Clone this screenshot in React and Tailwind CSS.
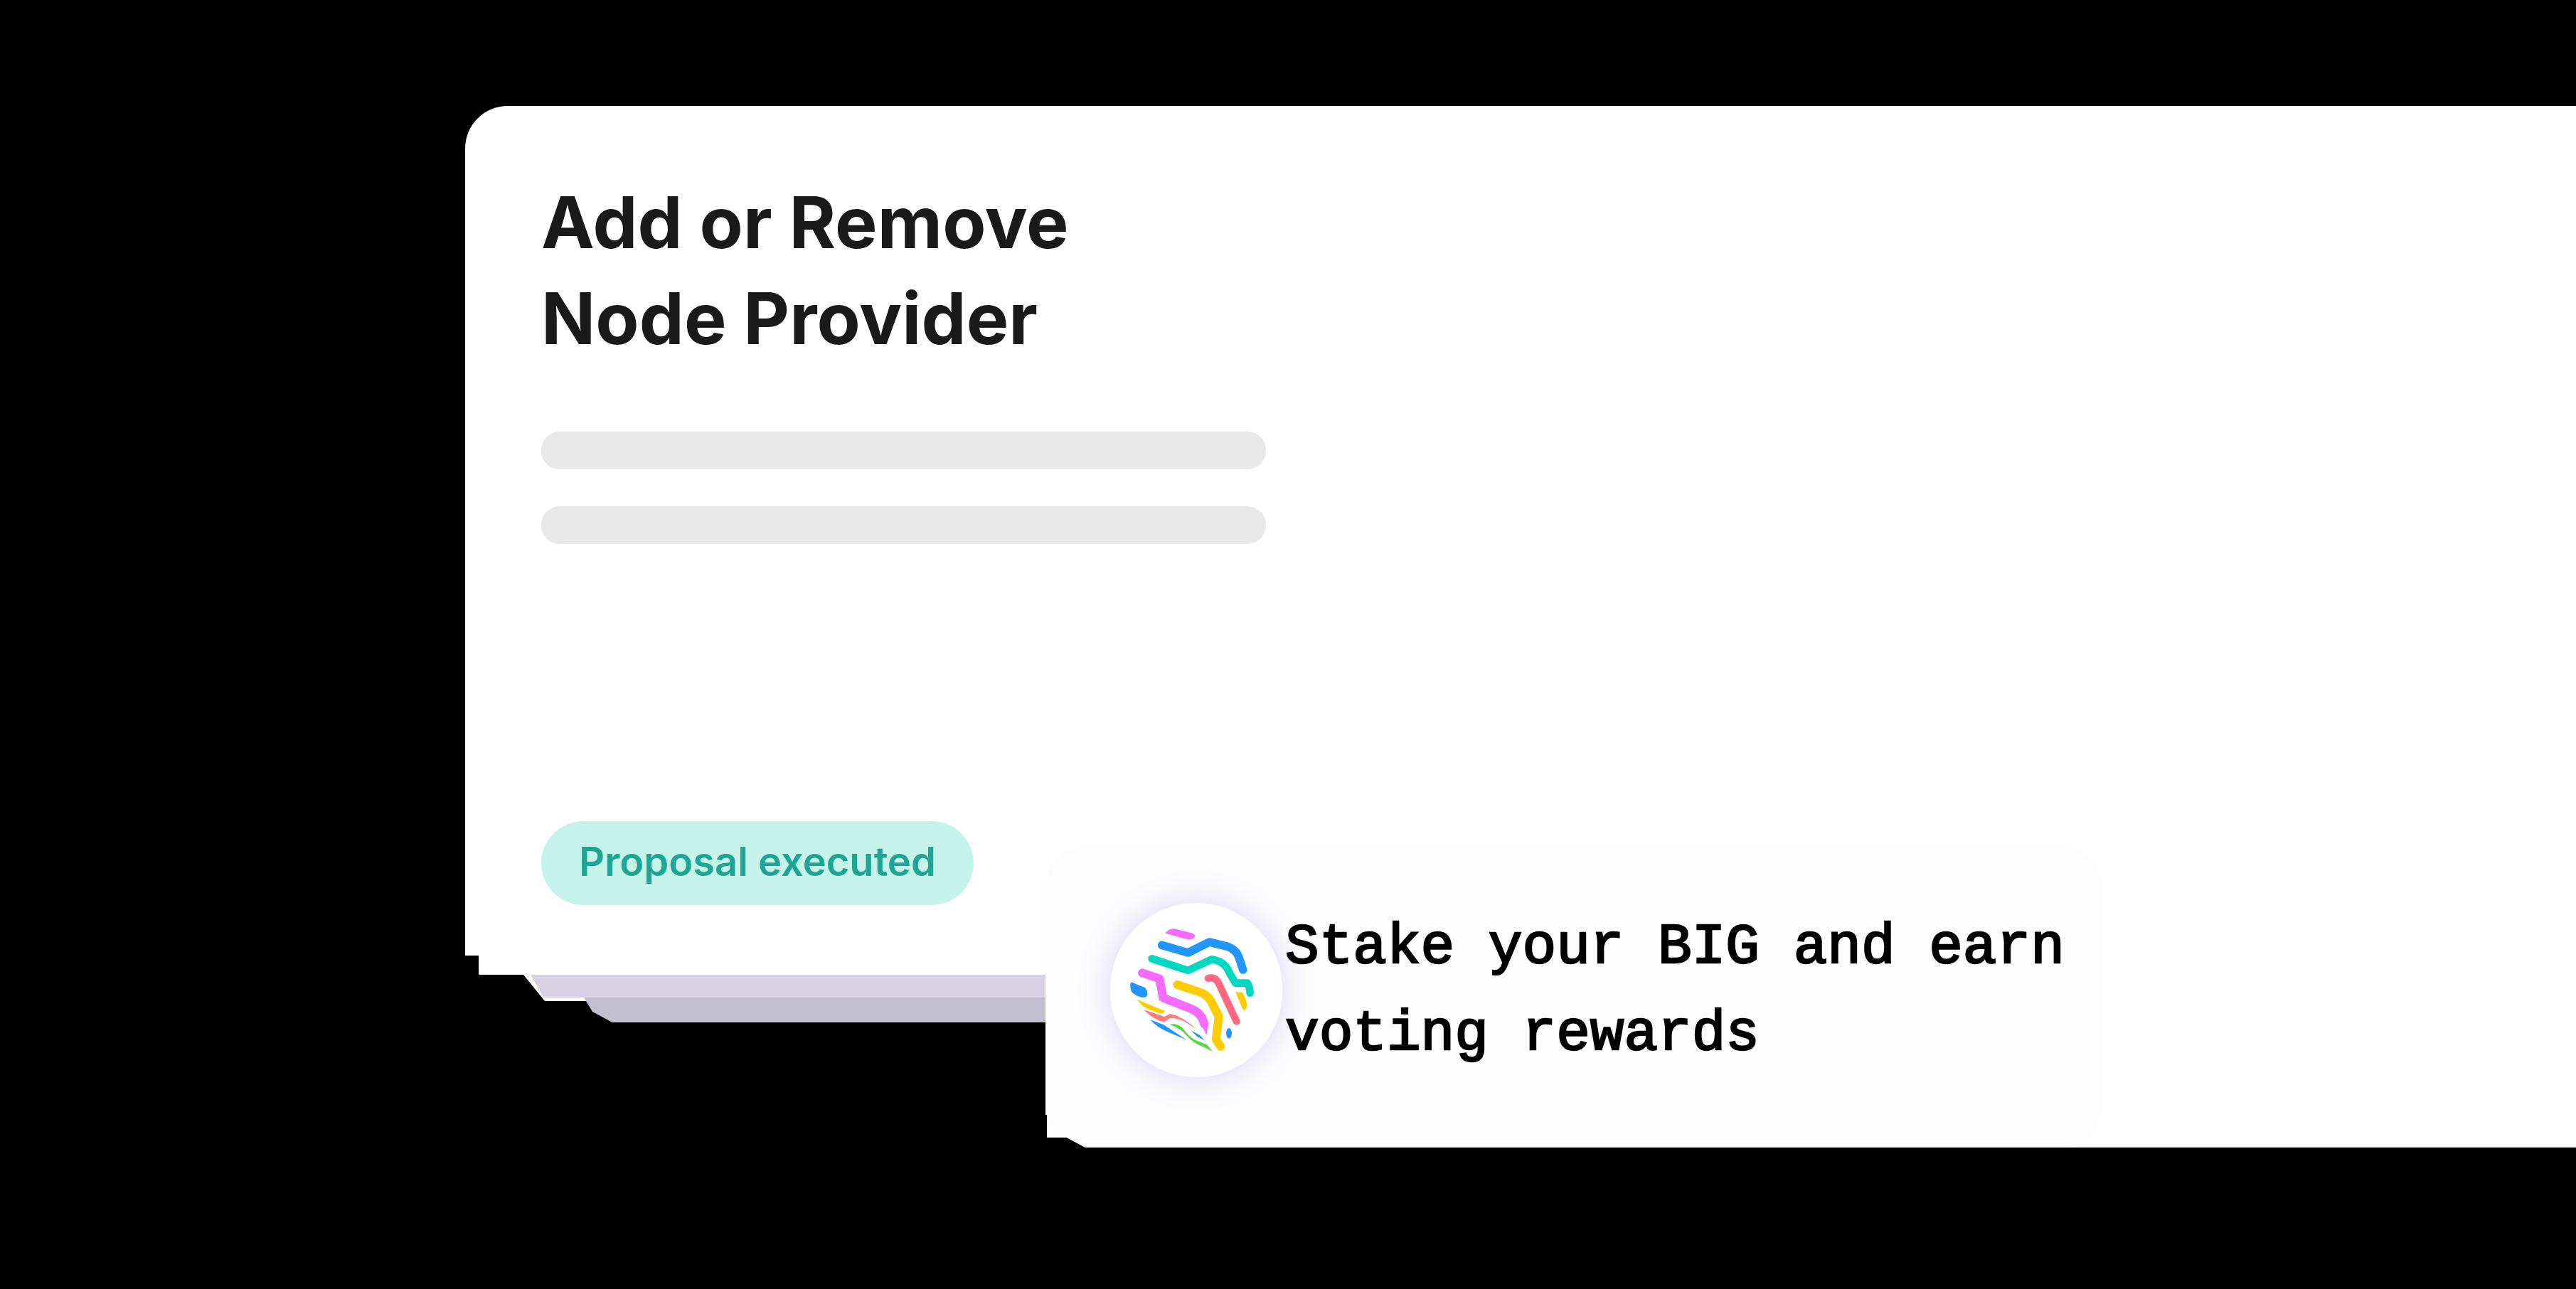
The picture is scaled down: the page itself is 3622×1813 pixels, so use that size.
/**
 * Proposal card with a staking notification laid over its corner
 */

const BigLogo = () => (
  <svg viewBox="62 90 726 735" className="w-full h-full" fill="none" strokeLinecap="round" strokeLinejoin="round">
    <path d="M295 218 Q310 195 340 200 L405 217 Q425 225 418 235 Q405 248 385 243 Z" fill="#f56bff" />
    <path d="M280 268 L390 300 L480 255 L560 275 Q595 290 605 320 L622 372" stroke="#2196ff" strokeWidth="35" />
    <path d="M238 325 L390 375 L490 328 Q545 335 565 385 L590 428 L640 428 Q650 440 652 470" stroke="#00d8c0" strokeWidth="32" />
    <path d="M197 385 L270 410 L285 490 L400 535 Q450 555 458 600" stroke="#f56bff" strokeWidth="36" />
    <path d="M440 590 L477 595 L468 648 Z" fill="#f56bff" />
    <path d="M345 435 L450 470 Q480 485 495 520 L520 570 L508 665 L528 696" stroke="#ffcc00" strokeWidth="36" />
    <path d="M475 408 Q505 400 520 430 L595 590" stroke="#ff6680" strokeWidth="30" />
    <path d="M590 465 L618 467 Q630 480 640 520 L630 545 Q620 540 615 525 Z" fill="#ffcc00" />
    <ellipse cx="563" cy="640" rx="12" ry="22" fill="#2196ff" />
    <path d="M147 430 Q150 420 165 430 L210 448 Q225 470 215 485 Q205 492 185 485 Q150 475 147 450 Z" fill="#2196ff" />
    <path d="M175 497 L295 547 L280 557 Q260 555 215 535 Q190 520 175 497 Z" fill="#ffcc00" />
    <path d="M203 540 L290 570 L315 558 Q370 570 425 622 L375 590 Q340 575 315 575 L290 593 Q240 580 203 540 Z" fill="#ff7a7a" />
    <path d="M230 582 L290 605 L385 668 L300 632 Q260 615 230 582 Z" fill="#2196ff" />
    <path d="M313 603 Q340 595 365 615 Q395 655 420 668 L470 688 L495 717 L450 695 Q410 680 385 650 Q360 620 313 603 Z" fill="#5cd646" />
    <path d="M402 628 L440 648 L460 670 L430 655 Z" fill="#2196ff" />
  </svg>
);

const App = () => {
  return (
    <div className="relative w-[3622px] h-[1813px] bg-black overflow-hidden pt-[149px] pl-[654px]">
      {/* Main card */}
      <div className="h-[1195px] bg-white rounded-tl-[60px] pl-[107px] pt-[96px] font-['Inter',sans-serif]">
        <h1 className="text-[100px] leading-[135px] font-bold text-[#1a1a1a] tracking-[0.1px]">
          Add or Remove
          <br />
          Node Provider
        </h1>
        <div className="mt-[92px] flex flex-col gap-[52px]">
          <div className="w-[1019px] h-[53px] rounded-[26px] bg-[#e8e8e8]"></div>
          <div className="w-[1019px] h-[53px] rounded-[26px] bg-[#e8e8e8]"></div>
        </div>
        <div className="mt-[390px] w-[608px] h-[118px] pb-[5px] rounded-full bg-[#c5f3ea] flex items-center justify-center text-[56px] font-semibold text-[#1fa594]">
          Proposal executed
        </div>
      </div>

      {/* Stacked cards peeking out below */}
      <div className="ml-[19px] h-[27px] bg-white"></div>
      <div className="ml-[82px] w-[734px] h-[37px] bg-white [clip-path:polygon(0_0,100%_0,100%_100%,30px_100%)]">
        <div className="h-[32px] bg-[#d6d1e3] [clip-path:polygon(10px_0,100%_0,100%_100%,28px_100%)]"></div>
      </div>
      <div className="-mt-[5px] ml-[167px] w-[649px] h-[35px] bg-[#c2bfd0] rounded-bl-[30px] [clip-path:polygon(0_0,100%_0,100%_100%,40px_100%,12px_20px)]"></div>

      {/* Notification, with its white backing sheet */}
      <div className="absolute left-[1470px] top-[1189px] right-0 h-[425px] bg-white [clip-path:polygon(0_0,100%_0,100%_100%,56px_100%,30px_411px,2px_411px,2px_379px,0_379px)]">
        <div className="w-[1486px] h-full bg-[#fdfdfe] rounded-[60px] pl-[91px] pt-[81px] flex items-start gap-[4px]">
          <div className="w-[242px] h-[245px] rounded-full bg-white shadow-[0_0_36px_10px_rgba(226,224,250,0.9)] shrink-0">
            <BigLogo />
          </div>
          <p className="pt-[2px] text-[79.4px] leading-[122px] text-black font-['Liberation_Mono',monospace] [-webkit-text-stroke:2.5px_black] whitespace-nowrap">
            Stake your BIG and earn
            <br />
            voting rewards
          </p>
        </div>
      </div>
    </div>
  );
};

export default App;
